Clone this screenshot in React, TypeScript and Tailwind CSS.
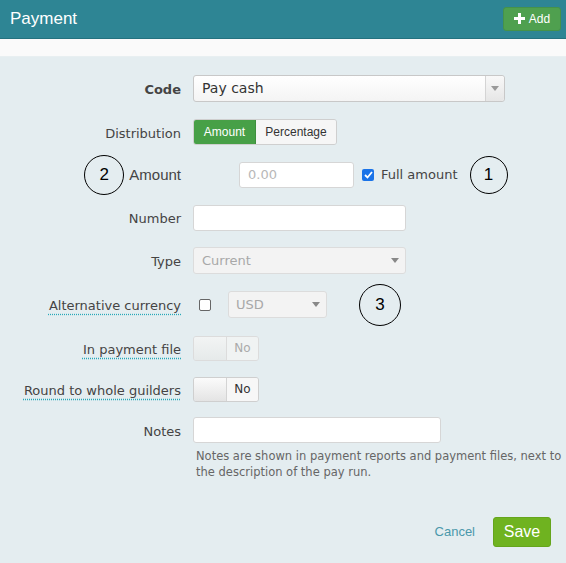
import React from "react";

const V = { fontFamily: '"DejaVu Sans", Verdana, sans-serif' };
const A = { fontFamily: '"Liberation Sans", Arial, sans-serif' };

function Circle({ n, className }: { n: string; className?: string }) {
  return (
    <div
      className={"flex items-center justify-center rounded-full border-[1.5px] border-black text-[17px] text-black " + (className || "")}
      style={A}
    >
      {n}
    </div>
  );
}

function Caret({ color = "#888" }: { color?: string }) {
  return (
    <svg width="8" height="5" viewBox="0 0 8 5">
      <path d="M0 0 L8 0 L4 5 Z" fill={color} />
    </svg>
  );
}

function Row({ h, label, children, dotted, bold }: { h: string; label?: React.ReactNode; children?: React.ReactNode; dotted?: boolean; bold?: boolean }) {
  return (
    <div className={"flex items-center " + h}>
      <div className="w-[181px] shrink-0 flex justify-end pt-[3px]">
        {label && (
          <span
            className={
              "text-[13px] text-[#444] leading-[16px] " +
              (bold ? "font-bold text-[#333] " : "") +
              (dotted ? "underline decoration-dotted decoration-[#27a9b8] underline-offset-[4px]" : "")
            }
          >
            {label}
          </span>
        )}
      </div>
      <div className="ml-[12px] flex items-center">{children}</div>
    </div>
  );
}

export default function App() {
  return (
    <div className="w-[566px] h-[563px] bg-[#e4edf0] overflow-hidden" style={V}>
      {/* header */}
      <div className="h-[39px] bg-[#2e8594] border-b border-[#24727f] flex items-center justify-between pl-[10px] pr-[5px]">
        <span className="text-white text-[17px]" style={A}>Payment</span>
        <button className="h-[24px] w-[58px] mt-[-1px] rounded-[3px] bg-[#4fa04f] border border-[#45924a] flex items-center justify-center gap-[4px] text-white text-[12px]" style={A}>
          <svg width="11" height="11" viewBox="0 0 11 11">
            <path d="M4 0 H7 V4 H11 V7 H7 V11 H4 V7 H0 V4 H4 Z" fill="white" />
          </svg>
          <span>Add</span>
        </button>
      </div>
      <div className="h-[18px] bg-[#fafafa] border-b border-[#e8eff1]" />

      <div className="pt-[9px]">
        {/* Code */}
        <Row h="h-[44px]" label="Code" bold>
          <div className="w-[312px] h-[27px] rounded-[3px] border border-[#c8c8c8] bg-gradient-to-b from-white to-[#f4f4f4] flex items-center">
            <span className="flex-1 pl-[8px] text-[14px] text-[#333]">Pay cash</span>
            <div className="w-[19px] h-full border-l border-[#d4d4d4] bg-gradient-to-b from-[#f8f8f8] to-[#e6e6e6] rounded-r-[3px] flex items-center justify-center">
              <Caret color="#999" />
            </div>
          </div>
        </Row>

        {/* Distribution */}
        <Row h="h-[44px]" label="Distribution">
          <div className="flex h-[26px] rounded-[3px] overflow-hidden border border-[#cfcfcf]" style={A}>
            <div className="w-[62px] bg-[#47a047] border-r border-[#3e8f3e] text-white text-[12px] flex items-center justify-center">Amount</div>
            <div className="w-[80px] bg-[#f6f6f6] text-[#333] text-[12px] flex items-center justify-center">Percentage</div>
          </div>
        </Row>

        {/* Amount */}
        <div className="flex items-center h-[42px]">
          <div className="w-[181px] shrink-0 flex items-center justify-end">
            <Circle n="2" className="w-[40px] h-[40px] mr-[5px]" />
            <span className="text-[15px] text-[#444]" style={A}>Amount</span>
          </div>
          <div className="ml-[58px] flex items-center">
            <div className="w-[115px] h-[26px] rounded-[3px] border border-[#d6d6d6] bg-white flex items-center pl-[8px] text-[13px] text-[#b8b8b8]">0.00</div>
            <div className="ml-[8px] w-[12px] h-[12px] rounded-[2px] bg-[#1a73e8] flex items-center justify-center">
              <svg width="9" height="8" viewBox="0 0 9 8">
                <path d="M1 4 L3.5 6.5 L8 1" stroke="white" strokeWidth="1.8" fill="none" />
              </svg>
            </div>
            <span className="ml-[7px] text-[13px] text-[#444]">Full amount</span>
            <Circle n="1" className="ml-[12px] w-[38px] h-[38px]" />
          </div>
        </div>

        {/* Number */}
        <Row h="h-[43px]" label="Number">
          <div className="w-[213px] h-[26px] rounded-[3px] border border-[#d6d6d6] bg-white" />
        </Row>

        {/* Type */}
        <Row h="h-[43px]" label="Type">
          <div className="w-[213px] h-[27px] rounded-[3px] border border-[#dcdcdc] bg-[#f3f3f3] flex items-center justify-between pl-[8px] pr-[6px]">
            <span className="text-[13px] text-[#a8a8a8]">Current</span>
            <Caret color="#888" />
          </div>
        </Row>

        {/* Alternative currency */}
        <Row h="h-[45px]" label="Alternative currency" dotted>
          <div className="ml-[6px] w-[12px] h-[12px] rounded-[2px] border border-[#666] bg-white" />
          <div className="ml-[17px] w-[99px] h-[27px] rounded-[3px] border border-[#dcdcdc] bg-[#f3f3f3] flex items-center justify-between pl-[7px] pr-[6px]">
            <span className="text-[13px] text-[#a8a8a8]">USD</span>
            <Caret color="#888" />
          </div>
          <Circle n="3" className="ml-[32px] w-[42px] h-[42px]" />
        </Row>

        {/* In payment file */}
        <Row h="h-[42px]" label="In payment file" dotted>
          <div className="w-[66px] h-[25px] rounded-[3px] border border-[#dcdcdc] flex overflow-hidden">
            <div className="w-[33px] bg-gradient-to-b from-[#f2f4f4] to-[#e6eaea] border-r border-[#dcdcdc]" />
            <div className="flex-1 bg-[#f0f3f3] flex items-center justify-center text-[12px] text-[#aaa]">No</div>
          </div>
        </Row>

        {/* Round */}
        <Row h="h-[40px]" label="Round to whole guilders" dotted>
          <div className="w-[66px] h-[25px] rounded-[3px] border border-[#cfcfcf] flex overflow-hidden">
            <div className="w-[33px] bg-gradient-to-b from-[#fbfbfb] to-[#e4e4e4] border-r border-[#d4d4d4]" />
            <div className="flex-1 bg-[#f7f7f7] flex items-center justify-center text-[12px] text-[#333]">No</div>
          </div>
        </Row>

        {/* Notes */}
        <div className="flex pt-[8px]">
          <div className="w-[181px] shrink-0 flex justify-end items-center h-[26px] pt-[3px]">
            <span className="text-[13px] text-[#444]">Notes</span>
          </div>
          <div className="ml-[12px] flex flex-col">
            <div className="w-[248px] h-[26px] rounded-[3px] border border-[#d6d6d6] bg-white" />
            <p className="mt-[5px] pl-[3px] w-[370px] text-[11.5px] leading-[16px] text-[#666]">
              Notes are shown in payment reports and payment files, next to the description of the pay run.
            </p>
          </div>
        </div>

        {/* Footer */}
        <div className="flex items-center justify-end pr-[15px] mt-[37px]">
          <span className="text-[13px] text-[#4a98ab] mr-[18px]" style={A}>Cancel</span>
          <button className="w-[58px] h-[30px] rounded-[3px] bg-[#6fb320] border border-[#65a51c] text-white text-[16px]" style={A}>Save</button>
        </div>
      </div>
    </div>
  );
}
